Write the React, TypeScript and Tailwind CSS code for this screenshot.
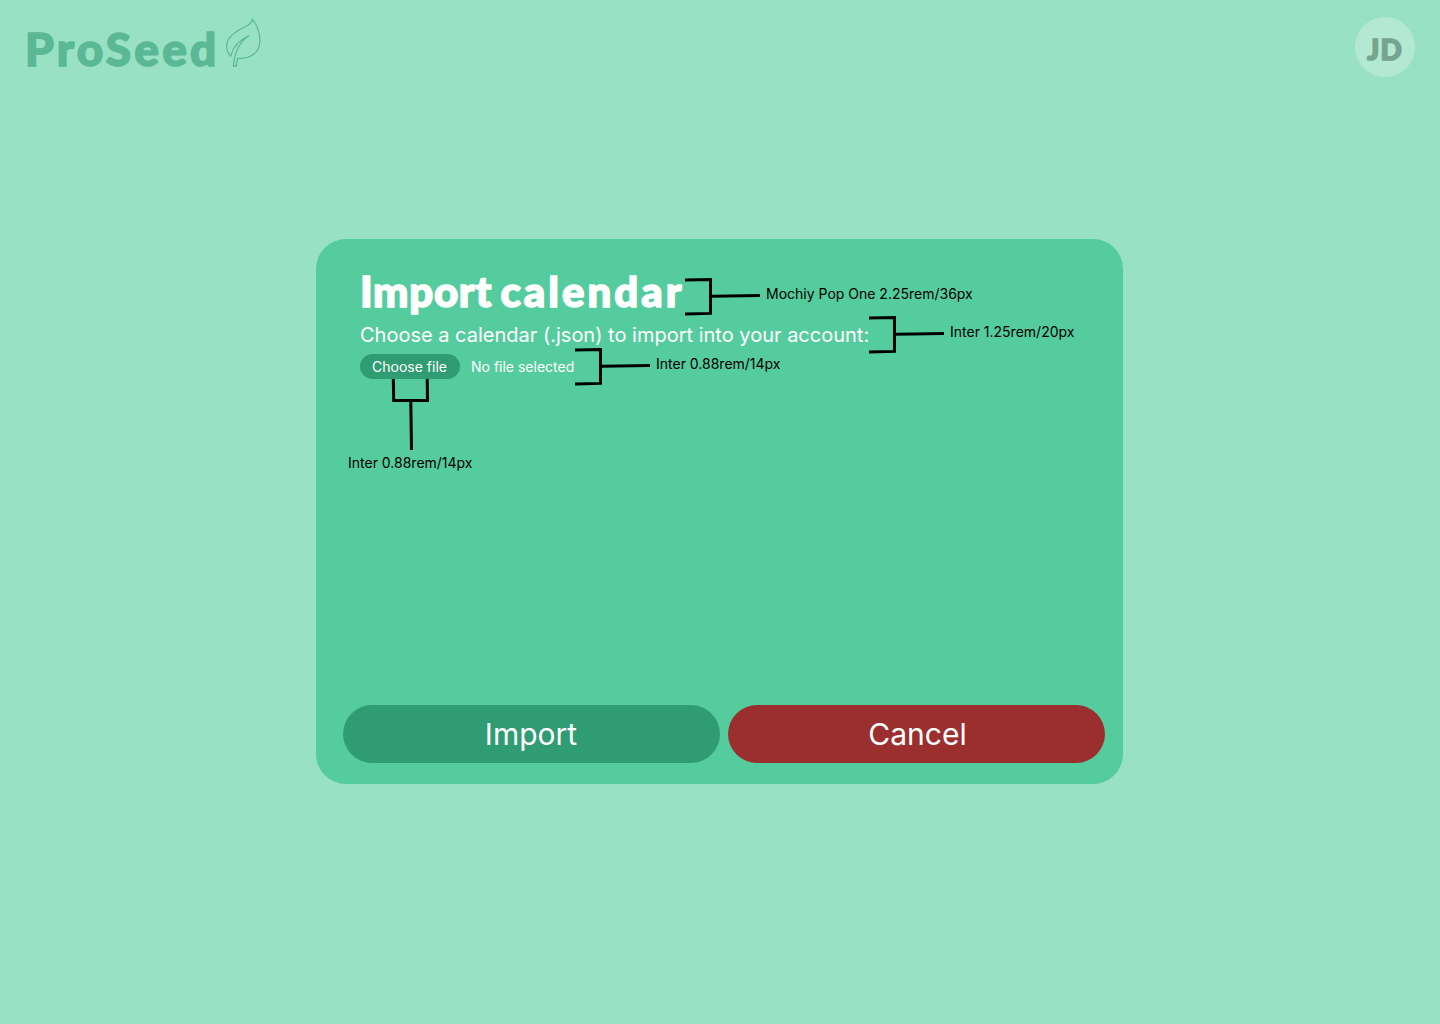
import React from "react";

const display =
  "font-['Lato'] font-black whitespace-nowrap leading-none [-webkit-text-stroke-width:1.5px] [stroke-linejoin:round] [paint-order:stroke_fill]";

function Leaf() {
  return (
    <svg className="absolute left-[224px] top-[16px]" width="40" height="54" viewBox="0 0 40 54" fill="none" stroke="#5bb896" strokeWidth="1.25" strokeLinejoin="round">
      <path d="M28.4 3C28.2 6.5 24.5 9.5 19.5 11.8C10.5 16 3 21.5 2.7 29.5C2.6 33.5 4 37 6.7 40.2C8.5 33 14 24.5 24.8 19.8C17 25 10.5 35 9.4 50.2L12.4 50.2C12.5 47 12.8 44.8 13.6 42.3C25 43.5 35.5 37.5 35.9 25.5C36.1 17 33 9.5 28.4 3Z" />
    </svg>
  );
}

function Bracket({ className }: { className: string }) {
  return (
    <svg className={`absolute ${className}`} width="76" height="40" viewBox="0 0 76 40" fill="none" stroke="#000" strokeWidth="3">
      <path d="M0 3L25.5 2.5V36.4L0 36.9" />
      <path d="M27 19.2L75 18.4" />
    </svg>
  );
}

function Note({ className, children }: { className: string; children: React.ReactNode }) {
  return (
    <span className={`absolute whitespace-nowrap text-sm leading-[17px] text-black ${className}`}>{children}</span>
  );
}

export default function App() {
  return (
    <div className="flex h-[1024px] w-[1440px] flex-col overflow-hidden bg-[#98e1c4] font-['Inter',sans-serif]">
      <header className="relative flex h-[94px] items-start justify-between pl-[25px] pr-[25px] pt-[17px]">
        <div className={`${display} pt-[9px] text-[46px] tracking-[3.2px] text-[#5bb896]`}>ProSeed</div>
        <Leaf />
        <div className="flex size-[60px] items-center justify-center rounded-full bg-[#b3e9d3]">
          <span className={`${display} pt-[3px] text-[28px] tracking-[1px] text-[#76a490]`}>JD</span>
        </div>
      </header>

      <main className="relative ml-[316px] mt-[145px] flex h-[545px] w-[807px] flex-col rounded-[30px] bg-[#55cc9e] pb-[21px] pl-[27px] pr-[18px] pt-[31px]">
        <section className="flex flex-col pl-[17px] text-white">
          <h1 className={`${display} h-[53px] text-[42px]`}>
            <span className="tracking-[0.7px]">Import</span>
            <span className="tracking-[-1.5px]"> </span>
            <span className="tracking-[3px]">calendar</span>
          </h1>
          <p className="h-[31px] whitespace-nowrap text-xl leading-6">
            Choose a calendar (.json) to import into your account:
          </p>
          <div className="flex h-[25px] items-center gap-[11px] text-sm">
            <button className="h-[25px] w-[100px] whitespace-nowrap rounded-full bg-[#309c73] pr-px">Choose file</button>
            <span className="whitespace-nowrap">No file selected</span>
          </div>
        </section>
        <div className="mt-auto flex gap-2 text-[30px] text-white">
          <button className="h-[58px] w-[377px] rounded-full bg-[#309c73] pr-px pt-px">Import</button>
          <button className="h-[58px] w-[377px] rounded-full bg-[#9b2f2f] pl-[2px] pt-px">Cancel</button>
        </div>

        <Bracket className="left-[369px] top-[38px]" />
        <Note className="left-[450px] top-[46px]">Mochiy Pop One 2.25rem/36px</Note>
        <Bracket className="left-[553px] top-[76px]" />
        <Note className="left-[634px] top-[84px]">Inter 1.25rem/20px</Note>
        <Bracket className="left-[259px] top-[108px]" />
        <Note className="left-[340px] top-[116px]">Inter 0.88rem/14px</Note>
        <svg className="absolute left-[75px] top-[140px]" width="40" height="71" viewBox="0 0 40 71" fill="none" stroke="#000" strokeWidth="3">
          <path d="M2.3 0L2.7 21.5H36.5L36.2 0" />
          <path d="M19.8 23L20.5 71" />
        </svg>
        <Note className="left-[32px] top-[215px]">Inter 0.88rem/14px</Note>
      </main>
    </div>
  );
}
